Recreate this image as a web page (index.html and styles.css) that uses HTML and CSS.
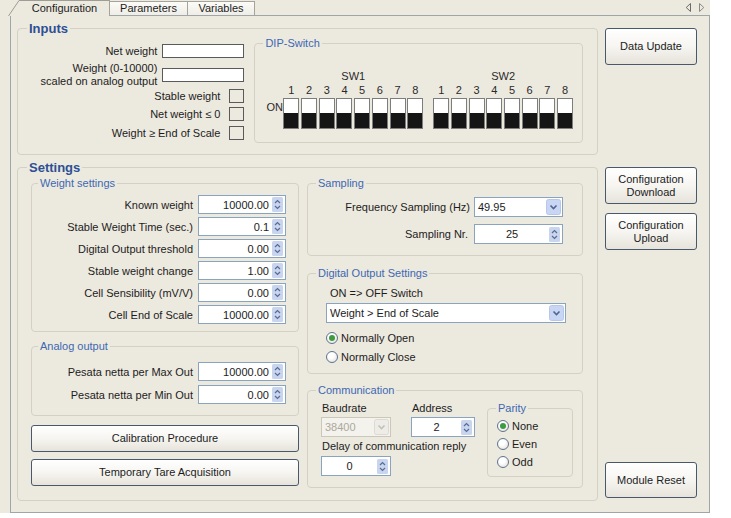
FILE: index.html
```html
<!DOCTYPE html>
<html lang="en">
<head>
<meta charset="utf-8">
<title>Configuration</title>
<link rel="stylesheet" href="styles.css">
</head>
<body>
<div class="window">
  <div class="tabbar">
    <div class="tab tab-active">
      <svg class="tab-ear" width="12" height="16" viewBox="0 0 12 16"><path d="M0 16 L11 0.5 L12 0.5 L12 16 Z" fill="#ECE9DF"/><path d="M0.5 16 L11 0.5 L12 0.5" fill="none" stroke="#9d9c95"/></svg>
      <span class="tab-label">Configuration</span>
    </div>
    <div class="tab tab-params"><span class="tab-label">Parameters</span></div>
    <div class="tab tab-vars"><span class="tab-label">Variables</span></div>
    <div class="tab-scroll">
      <svg width="20" height="9" viewBox="0 0 20 9"><path d="M5.5 0.5 L1.2 4.5 L5.5 8.5 Z" fill="none" stroke="#6a6a6a"/><path d="M14.5 0.5 L18.8 4.5 L14.5 8.5 Z" fill="none" stroke="#8a8a8a"/></svg>
    </div>
  </div>

  <div class="page">
    <div class="main-col">
      <fieldset class="group group-major inputs">
        <legend>Inputs</legend>
        <div class="inputs-body">
          <div class="inputs-form">
            <div class="frow frow-1"><span>Net weight</span><span class="textbox"></span></div>
            <div class="frow frow-2"><span class="two-line">Weight (0-10000)<br>scaled on analog output</span><span class="textbox"></span></div>
            <div class="frow frow-3"><span>Stable weight</span><span class="checkbox"></span></div>
            <div class="frow frow-4"><span>Net weight ≤ 0</span><span class="checkbox"></span></div>
            <div class="frow frow-5"><span>Weight ≥ End of Scale</span><span class="checkbox"></span></div>
          </div>
          <fieldset class="group dip">
            <legend>DIP-Switch</legend>
            <div class="dip-body">
              <span class="dip-on">ON</span>
              <div class="bank">
                <div class="bank-name">SW1</div>
                <div class="bank-nums"><span>1</span><span>2</span><span>3</span><span>4</span><span>5</span><span>6</span><span>7</span><span>8</span></div>
                <div class="bank-sws"><span class="sw"></span><span class="sw"></span><span class="sw"></span><span class="sw"></span><span class="sw"></span><span class="sw"></span><span class="sw"></span><span class="sw"></span></div>
              </div>
              <div class="bank">
                <div class="bank-name">SW2</div>
                <div class="bank-nums"><span>1</span><span>2</span><span>3</span><span>4</span><span>5</span><span>6</span><span>7</span><span>8</span></div>
                <div class="bank-sws"><span class="sw"></span><span class="sw"></span><span class="sw"></span><span class="sw"></span><span class="sw"></span><span class="sw"></span><span class="sw"></span><span class="sw"></span></div>
              </div>
            </div>
          </fieldset>
        </div>
      </fieldset>

      <fieldset class="group group-major settings">
        <legend>Settings</legend>
        <div class="settings-cols">
          <div class="settings-left">
            <fieldset class="group weight">
              <legend>Weight settings</legend>
              <div class="srow"><span>Known weight</span><div class="spin w88"><span class="spin-val">10000.00</span><svg class="spin-btns" width="11" height="15" viewBox="0 0 11 15"><rect x="0" y="0" width="11" height="15" rx="1.5" fill="#C9D5EE"/><path d="M3 6 L5.5 3.5 L8 6" fill="none" stroke="#566c93" stroke-width="1.2"/><path d="M3 9 L5.5 11.5 L8 9" fill="none" stroke="#566c93" stroke-width="1.2"/></svg></div></div>
              <div class="srow"><span>Stable Weight Time (sec.)</span><div class="spin w88"><span class="spin-val">0.1</span><svg class="spin-btns" width="11" height="15" viewBox="0 0 11 15"><rect x="0" y="0" width="11" height="15" rx="1.5" fill="#C9D5EE"/><path d="M3 6 L5.5 3.5 L8 6" fill="none" stroke="#566c93" stroke-width="1.2"/><path d="M3 9 L5.5 11.5 L8 9" fill="none" stroke="#566c93" stroke-width="1.2"/></svg></div></div>
              <div class="srow"><span>Digital Output threshold</span><div class="spin w88"><span class="spin-val">0.00</span><svg class="spin-btns" width="11" height="15" viewBox="0 0 11 15"><rect x="0" y="0" width="11" height="15" rx="1.5" fill="#C9D5EE"/><path d="M3 6 L5.5 3.5 L8 6" fill="none" stroke="#566c93" stroke-width="1.2"/><path d="M3 9 L5.5 11.5 L8 9" fill="none" stroke="#566c93" stroke-width="1.2"/></svg></div></div>
              <div class="srow"><span>Stable weight change</span><div class="spin w88"><span class="spin-val">1.00</span><svg class="spin-btns" width="11" height="15" viewBox="0 0 11 15"><rect x="0" y="0" width="11" height="15" rx="1.5" fill="#C9D5EE"/><path d="M3 6 L5.5 3.5 L8 6" fill="none" stroke="#566c93" stroke-width="1.2"/><path d="M3 9 L5.5 11.5 L8 9" fill="none" stroke="#566c93" stroke-width="1.2"/></svg></div></div>
              <div class="srow"><span>Cell Sensibility (mV/V)</span><div class="spin w88"><span class="spin-val">0.00</span><svg class="spin-btns" width="11" height="15" viewBox="0 0 11 15"><rect x="0" y="0" width="11" height="15" rx="1.5" fill="#C9D5EE"/><path d="M3 6 L5.5 3.5 L8 6" fill="none" stroke="#566c93" stroke-width="1.2"/><path d="M3 9 L5.5 11.5 L8 9" fill="none" stroke="#566c93" stroke-width="1.2"/></svg></div></div>
              <div class="srow"><span>Cell End of Scale</span><div class="spin w88"><span class="spin-val">10000.00</span><svg class="spin-btns" width="11" height="15" viewBox="0 0 11 15"><rect x="0" y="0" width="11" height="15" rx="1.5" fill="#C9D5EE"/><path d="M3 6 L5.5 3.5 L8 6" fill="none" stroke="#566c93" stroke-width="1.2"/><path d="M3 9 L5.5 11.5 L8 9" fill="none" stroke="#566c93" stroke-width="1.2"/></svg></div></div>
            </fieldset>

            <fieldset class="group analog">
              <legend>Analog output</legend>
              <div class="srow"><span>Pesata netta per Max Out</span><div class="spin w88"><span class="spin-val">10000.00</span><svg class="spin-btns" width="11" height="15" viewBox="0 0 11 15"><rect x="0" y="0" width="11" height="15" rx="1.5" fill="#C9D5EE"/><path d="M3 6 L5.5 3.5 L8 6" fill="none" stroke="#566c93" stroke-width="1.2"/><path d="M3 9 L5.5 11.5 L8 9" fill="none" stroke="#566c93" stroke-width="1.2"/></svg></div></div>
              <div class="srow"><span>Pesata netta per Min Out</span><div class="spin w88"><span class="spin-val">0.00</span><svg class="spin-btns" width="11" height="15" viewBox="0 0 11 15"><rect x="0" y="0" width="11" height="15" rx="1.5" fill="#C9D5EE"/><path d="M3 6 L5.5 3.5 L8 6" fill="none" stroke="#566c93" stroke-width="1.2"/><path d="M3 9 L5.5 11.5 L8 9" fill="none" stroke="#566c93" stroke-width="1.2"/></svg></div></div>
            </fieldset>

            <button class="btn wide btn-cal">Calibration Procedure</button>
            <button class="btn wide btn-tare">Temporary Tare Acquisition</button>
          </div>

          <div class="settings-right">
            <fieldset class="group sampling">
              <legend>Sampling</legend>
              <div class="samp-row samp-freq"><span>Frequency Sampling (Hz)</span>
                <div class="combo w89"><span class="combo-val">49.95</span><svg class="combo-btn" width="15" height="16" viewBox="0 0 15 16"><rect x="0.5" y="0.5" width="14" height="15" rx="2" fill="#C8D6F4" stroke="#B7C7EC"/><path d="M4.5 6.5 L7.5 9.5 L10.5 6.5" fill="none" stroke="#4f6490" stroke-width="1.6"/></svg></div>
              </div>
              <div class="samp-row samp-nr"><span>Sampling Nr.</span>
                <div class="spin spin-tall w89"><span class="spin-val center">25</span><svg class="spin-btns" width="11" height="15" viewBox="0 0 11 15"><rect x="0" y="0" width="11" height="15" rx="1.5" fill="#C9D5EE"/><path d="M3 6 L5.5 3.5 L8 6" fill="none" stroke="#566c93" stroke-width="1.2"/><path d="M3 9 L5.5 11.5 L8 9" fill="none" stroke="#566c93" stroke-width="1.2"/></svg></div>
              </div>
            </fieldset>

            <fieldset class="group digital">
              <legend>Digital Output Settings</legend>
              <div class="dig-label">ON =&gt; OFF Switch</div>
              <div class="combo dig-combo"><span class="combo-val">Weight &gt; End of Scale</span><svg class="combo-btn" width="15" height="16" viewBox="0 0 15 16"><rect x="0.5" y="0.5" width="14" height="15" rx="2" fill="#C8D6F4" stroke="#B7C7EC"/><path d="M4.5 6.5 L7.5 9.5 L10.5 6.5" fill="none" stroke="#4f6490" stroke-width="1.6"/></svg></div>
              <div class="radio radio-first"><span class="radio-dot on"></span><span>Normally Open</span></div>
              <div class="radio"><span class="radio-dot"></span><span>Normally Close</span></div>
            </fieldset>

            <fieldset class="group comm">
              <legend>Communication</legend>
              <div class="comm-body">
                <div class="comm-grid">
                  <span class="comm-label">Baudrate</span>
                  <span class="comm-label">Address</span>
                  <div class="combo combo-off"><span class="combo-val">38400</span><svg class="combo-btn" width="15" height="16" viewBox="0 0 15 16"><rect x="0.5" y="0.5" width="14" height="15" rx="2" fill="#EEECE6" stroke="#DDDAD2"/><path d="M4.5 6.5 L7.5 9.5 L10.5 6.5" fill="none" stroke="#C2C0B8" stroke-width="1.6"/></svg></div>
                  <div class="spin spin-tall"><span class="spin-val center">2</span><svg class="spin-btns" width="11" height="15" viewBox="0 0 11 15"><rect x="0" y="0" width="11" height="15" rx="1.5" fill="#C9D5EE"/><path d="M3 6 L5.5 3.5 L8 6" fill="none" stroke="#566c93" stroke-width="1.2"/><path d="M3 9 L5.5 11.5 L8 9" fill="none" stroke="#566c93" stroke-width="1.2"/></svg></div>
                  <span class="comm-label comm-span">Delay of communication reply</span>
                  <div class="spin spin-tall comm-delay"><span class="spin-val center">0</span><svg class="spin-btns" width="11" height="15" viewBox="0 0 11 15"><rect x="0" y="0" width="11" height="15" rx="1.5" fill="#C9D5EE"/><path d="M3 6 L5.5 3.5 L8 6" fill="none" stroke="#566c93" stroke-width="1.2"/><path d="M3 9 L5.5 11.5 L8 9" fill="none" stroke="#566c93" stroke-width="1.2"/></svg></div>
                </div>
                <fieldset class="group parity">
                  <legend>Parity</legend>
                  <div class="radio"><span class="radio-dot on"></span><span>None</span></div>
                  <div class="radio"><span class="radio-dot"></span><span>Even</span></div>
                  <div class="radio"><span class="radio-dot"></span><span>Odd</span></div>
                </fieldset>
              </div>
            </fieldset>
          </div>
        </div>
      </fieldset>
    </div>

    <div class="side-col">
      <button class="btn side btn-update">Data Update</button>
      <button class="btn side btn-download">Configuration<br>Download</button>
      <button class="btn side btn-upload">Configuration<br>Upload</button>
      <button class="btn side btn-reset">Module Reset</button>
    </div>
  </div>
</div>
</body>
</html>
```

FILE: styles.css
```css
* { box-sizing: border-box; }

html, body {
  margin: 0;
  background: #ffffff;
}

body {
  font-family: "Liberation Sans", Arial, sans-serif;
  font-size: 11px;
  color: #1c1c1c;
}

/* ---------- window & tab strip ---------- */
.window {
  width: 710px;
  height: 513px;
  background: #ECE9DF;
  display: flex;
  flex-direction: column;
}

.tabbar {
  height: 15px;
  flex: none;
  display: flex;
  align-items: flex-end;
  padding-left: 8px;
}

.tab {
  height: 14px;
  display: flex;
}

.tab-label {
  display: flex;
  align-items: center;
  justify-content: center;
  height: 100%;
  padding-bottom: 1px;
  border-top: 1px solid #a4a39c;
  border-right: 1px solid #a4a39c;
  background: linear-gradient(#fcfbf8, #efede6);
  line-height: 12px;
}

.tab-ear { display: block; flex: none; }

.tab-active {
  height: 16px;
  margin-bottom: -1px;
  position: relative;
}

.tab-active .tab-label {
  width: 90px;
  background: #ECE9DF;
  border-top-color: #9d9c95;
  padding-bottom: 2px;
}

.tab-params .tab-label { width: 78px; }
.tab-vars .tab-label { width: 67px; }

.tab-scroll {
  margin-left: auto;
  margin-right: 5px;
  align-self: center;
  display: flex;
}

/* ---------- tab page ---------- */
.page {
  flex: 1;
  margin-left: 10px;
  border: 1px solid #9fa6a7;
  display: flex;
  gap: 7px;
  padding: 5px 12px 11px 6px;
}

.main-col {
  width: 581px;
  display: flex;
  flex-direction: column;
}

.side-col {
  width: 92px;
  display: flex;
  flex-direction: column;
}

/* ---------- group boxes ---------- */
.group {
  margin: 0;
  padding: 0;
  min-width: 0;
  border: 1px solid #D4D1C4;
  border-radius: 4px;
}

.group > legend {
  padding: 0 2px;
  font-size: 11px;
  line-height: 13px;
  color: #3D68B2;
}

.group-major > legend {
  font-size: 13px;
  font-weight: bold;
  line-height: 15px;
  color: #2C4F95;
}

/* ---------- inputs ---------- */
.inputs { padding: 1px 14px 11px 0; }
.inputs > legend { margin-left: 9px; }

.inputs-body {
  display: flex;
  align-items: flex-start;
}

.inputs-form {
  flex: 1;
  margin-top: 7px;
  display: flex;
  flex-direction: column;
}

.frow {
  display: flex;
  justify-content: flex-end;
  align-items: center;
  gap: 5px;
  height: 16px;
  white-space: nowrap;
}

.frow-1 { height: 14px; }
.frow-2 { height: 26px; margin-top: 4px; }
.frow-4 { margin-top: 2px; }
.frow-5 { margin-top: 3px; }

.two-line {
  text-align: right;
  line-height: 13px;
}

.textbox {
  width: 82px;
  height: 14px;
  background: #ffffff;
  border: 1px solid #5a5a5a;
}

.checkbox {
  width: 15px;
  height: 14px;
  border: 1px solid #5a5a5a;
  margin-left: 4px;
}

/* ---------- DIP switches ---------- */
.dip {
  flex: none;
  margin-left: 10px;
  padding: 20px 9px 13px 11px;
}

.dip > legend { margin-left: -3px; }

.dip-body {
  display: flex;
  align-items: flex-end;
}

.dip-on {
  width: 17px;
  line-height: 13px;
  margin-bottom: 15px;
  color: #2a2a2a;
}

.bank + .bank { margin-left: 10px; }

.bank-name {
  text-align: center;
  line-height: 13px;
  color: #2a2a2a;
}

.bank-nums,
.bank-sws {
  display: grid;
  grid-template-columns: repeat(8, 16px);
  column-gap: 1.7px;
}

.bank-nums {
  margin-top: 1px;
  line-height: 13px;
  text-align: center;
  color: #2a2a2a;
}

.bank-sws { margin-top: 1px; }

.sw {
  height: 31px;
  border: 1px solid #7d7d7d;
  background: linear-gradient(#ffffff 0 14px, #151515 14px);
}

/* ---------- settings ---------- */
.settings {
  flex: 1;
  margin-top: 5px;
  padding: 2px 14px 12px 13px;
}

.settings > legend { margin-left: -4px; }

.settings-cols {
  display: flex;
  gap: 8px;
}

.settings-left {
  width: 268px;
  display: flex;
  flex-direction: column;
}

.settings-right {
  width: 276px;
  display: flex;
  flex-direction: column;
}

.weight { padding: 5px 12px 7px 6px; }
.analog { margin-top: 8px; padding: 9px 12px 11px 6px; }
.weight > legend,
.analog > legend { margin-left: 0; }

.srow {
  display: flex;
  justify-content: flex-end;
  align-items: center;
  gap: 5px;
  height: 19px;
  white-space: nowrap;
}

.weight .srow + .srow { margin-top: 3px; }
.analog .srow + .srow { margin-top: 4px; }

/* ---------- spin boxes & combos ---------- */
.spin {
  display: flex;
  align-items: center;
  height: 19px;
  background: #ffffff;
  border: 1px solid #8aa3bf;
}

.spin-tall { height: 20px; }

.w88 { width: 88px; }
.w89 { width: 89px; }

.spin-val {
  flex: 1;
  text-align: right;
  padding-right: 3px;
}

.spin-val.center {
  text-align: center;
  padding-right: 0;
}

.spin-btns {
  display: block;
  flex: none;
  margin-right: 2px;
}

.combo {
  display: flex;
  align-items: center;
  height: 20px;
  background: #ffffff;
  border: 1px solid #8aa3bf;
}

.combo-val {
  flex: 1;
  padding-left: 3px;
  white-space: nowrap;
}

.combo-btn {
  display: block;
  flex: none;
  margin-right: 1px;
}

.combo-off {
  background: #F3F2EC;
  border-color: #CBC8BB;
  color: #ABA99C;
}

/* ---------- sampling ---------- */
.sampling { padding: 7px 19px 11px 10px; }
.sampling > legend { margin-left: -2px; }

.samp-row {
  display: flex;
  justify-content: flex-end;
  align-items: center;
  height: 20px;
  white-space: nowrap;
}

.samp-freq { gap: 4px; }
.samp-nr { gap: 6px; margin-top: 7px; }

/* ---------- digital output ---------- */
.digital { margin-top: 11px; padding: 7px 16px 7px 18px; }
.digital > legend { margin-left: -10px; }

.dig-label {
  line-height: 13px;
  margin-left: 4px;
}

.dig-combo { margin-top: 3px; }

.radio {
  display: flex;
  align-items: center;
  gap: 3px;
  height: 18px;
}

.digital .radio-first { margin-top: 6px; }
.digital .radio + .radio { margin-top: 1px; }

.radio-dot {
  width: 12px;
  height: 12px;
  flex: none;
  border-radius: 50%;
  border: 1px solid #5f7390;
  background: radial-gradient(circle at 40% 35%, #ffffff 30%, #dedbd0);
  display: flex;
  align-items: center;
  justify-content: center;
}

.radio-dot.on::after {
  content: "";
  width: 6px;
  height: 6px;
  border-radius: 50%;
  background: #3f9a40;
}

/* ---------- communication ---------- */
.comm { margin-top: 10px; padding: 5px 9px 10px 13px; }
.comm > legend { margin-left: -5px; }

.comm-body {
  display: flex;
  align-items: flex-start;
}

.comm-grid {
  display: grid;
  grid-template-columns: 70px 64px;
  column-gap: 20px;
}

.comm-grid > :nth-child(3),
.comm-grid > :nth-child(4) { margin-top: 2px; }

.comm-label {
  line-height: 13px;
  padding-left: 1px;
  white-space: nowrap;
}

.comm-span {
  grid-column: 1 / -1;
  margin-top: 3px;
}

.comm-delay { margin-top: 3px; }

.parity {
  margin-left: 12px;
  width: 86px;
  padding: 2px 9px 5px 9px;
}

.parity > legend { margin-left: -1px; }

/* ---------- buttons ---------- */
.btn {
  font: inherit;
  color: #1c1c1c;
  line-height: 13px;
  padding: 0;
  border: 1px solid #4a586e;
  border-radius: 3px;
  background: linear-gradient(#ffffff, #f6f5f1 50%, #e6e3da);
}

.wide { height: 27px; }
.btn-cal { margin-top: 9px; }
.btn-tare { margin-top: 7px; }

.side { height: 37px; }
.btn-update { margin-top: 7px; }
.btn-download { margin-top: 102px; }
.btn-upload { margin-top: 9px; }
.btn-reset { margin-top: auto; margin-bottom: 3px; height: 36px; }
```
